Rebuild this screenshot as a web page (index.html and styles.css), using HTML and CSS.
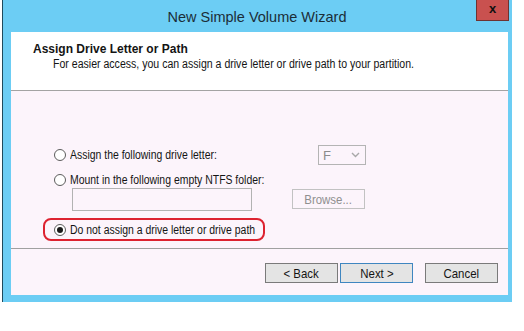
FILE: index.html
```html
<!DOCTYPE html>
<html lang="en">
<head>
  <meta charset="UTF-8">
  <title>New Simple Volume Wizard</title>
  <link rel="stylesheet" href="styles.css">
</head>
<body>
  <div class="window">
    <div class="titlebar">
      <span class="title">New Simple Volume Wizard</span>
      <span class="close">x</span>
    </div>

    <div class="header">
      <h1>Assign Drive Letter or Path</h1>
      <p>For easier access, you can assign a drive letter or drive path to your partition.</p>
    </div>

    <div class="content">
      <div class="options">
        <div class="row row-letter">
          <span class="radio"></span>
          <span class="label">Assign the following drive letter:</span>
          <div class="dropdown">
            <span>F</span>
            <svg width="9" height="6" viewBox="0 0 9 6"><path d="M1 1 L4.5 4.5 L8 1" fill="none" stroke="#a8a8a8" stroke-width="1.4"/></svg>
          </div>
        </div>

        <div class="row row-mount">
          <span class="radio"></span>
          <span class="label">Mount in the following empty NTFS folder:</span>
        </div>
        <div class="folder">
          <div class="textbox"></div>
          <div class="btn disabled"><span>Browse...</span></div>
        </div>

        <div class="row row-none">
          <span class="radio checked"></span>
          <span class="label">Do not assign a drive letter or drive path</span>
        </div>
      </div>

      <div class="footer">
        <div class="btn"><span>&lt; Back</span></div>
        <div class="btn primary"><span>Next &gt;</span></div>
        <div class="btn cancel"><span>Cancel</span></div>
      </div>
    </div>
  </div>
</body>
</html>
```

FILE: styles.css
```css
* { box-sizing: border-box; }

body {
  margin: 0;
  background: #ffffff;
  font-family: "Liberation Sans", Arial, sans-serif;
  font-size: 12px;
  color: #141414;
}

.window {
  margin-left: 2px;
  width: 510px;
  background: #6ccdf4;
  border-left: 1px solid #1f4a5c;
  padding: 0 4px 7px 8px;
}

.titlebar {
  position: relative;
  height: 32px;
  display: flex;
  align-items: center;
  justify-content: center;
  margin-left: -9px;
  margin-right: -4px;
}

.title {
  font-size: 14.5px;
  color: #1b2e38;
  margin-top: 1px;
}

.close {
  position: absolute;
  top: 0;
  right: 3px;
  width: 33px;
  height: 21px;
  background: #c9514f;
  border: 1px solid #6e3331;
  border-top: none;
  color: #111;
  font-weight: bold;
  font-size: 13px;
  text-align: center;
  line-height: 17px;
}

.header {
  background: #ffffff;
  height: 59px;
  border-bottom: 1px solid #a3a3a3;
  padding: 10px 0 0 22px;
}

.header h1 {
  margin: 0;
  font-size: 12px;
  font-weight: bold;
  line-height: 15px;
}

/* the dialog font is narrower than Arial */
.header p,
.label,
.btn span {
  display: inline-block;
  transform: scaleX(0.88);
  transform-origin: left center;
  white-space: nowrap;
}

.header p {
  margin: 0 0 0 20px;
  line-height: 15px;
}

.content {
  background: #fcf4fb;
  height: 204px;
}

.options {
  padding: 54px 0 0 43px;
  height: 157px;
}

.row {
  display: flex;
  align-items: center;
  white-space: nowrap;
}

.label {
  flex: none;
  transform: scaleX(0.87);
}

.radio {
  flex: none;
  width: 12px;
  height: 12px;
  border: 1px solid #5c5c5c;
  border-radius: 50%;
  background: #ffffff;
  margin-right: 4px;
  display: flex;
  align-items: center;
  justify-content: center;
}

.radio.checked::after {
  content: "";
  width: 6px;
  height: 6px;
  border-radius: 50%;
  background: #1a1a1a;
}

.row-letter {
  width: 312px;
  height: 20px;
}

.dropdown {
  margin-left: auto;
  width: 48px;
  height: 20px;
  border: 1px solid #b4b4b4;
  display: flex;
  align-items: center;
  justify-content: space-between;
  padding: 0 5px 0 4px;
  color: #8c8c8c;
  font-size: 13px;
}

.row-mount {
  margin-top: 8px;
  height: 14px;
}

.folder {
  display: flex;
  align-items: flex-start;
  margin: 1px 0 0 18px;
}

.textbox {
  width: 180px;
  height: 23px;
  border: 1px solid #b2b2b2;
}

.folder .btn {
  margin: 1px 0 0 40px;
}

.row-none {
  width: 222px;
  height: 23px;
  margin: 7px 0 0 -11px;
  padding-left: 9px;
  border: 2px solid #dd2230;
  border-radius: 8px;
}

.footer {
  border-top: 1px solid #a0a0a0;
  display: flex;
  justify-content: flex-end;
  padding: 14px 10px 0 0;
}

.btn {
  width: 73px;
  height: 20px;
  border: 1px solid #7a7a7a;
  background: #e4e4e4;
  display: flex;
  align-items: center;
  justify-content: center;
  font-size: 13px;
}

.btn span {
  transform-origin: center;
}

.btn.primary {
  margin-left: 2px;
  border-color: #3f86c0;
}

.btn.cancel {
  margin-left: 12px;
}

.btn.disabled {
  background: transparent;
  border-color: #c2c2c2;
  color: #8f8f8f;
}
```
